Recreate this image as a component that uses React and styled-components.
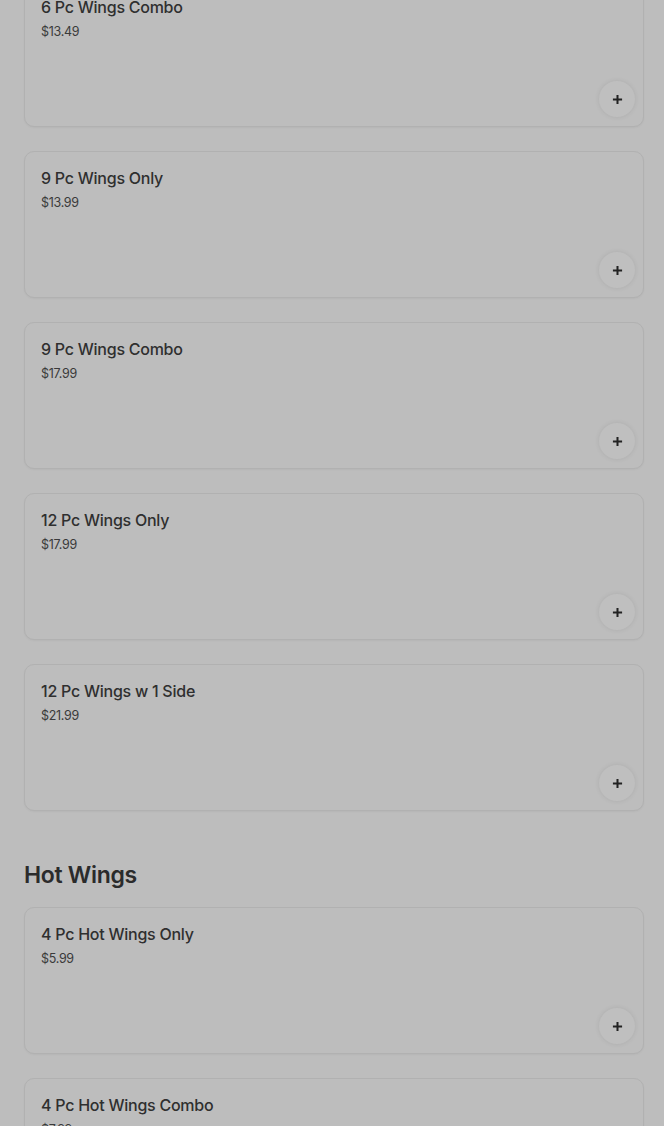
import React from "react";
import styled, { createGlobalStyle } from "styled-components";

const GlobalStyle = createGlobalStyle`
  html, body {
    margin: 0;
    padding: 0;
    background: #bdbdbd;
  }
  body {
    font-family: Inter, "Noto Sans", "Liberation Sans", sans-serif;
    color: #2e2e2e;
    overflow: hidden;
  }
`;

const sections = [
  {
    title: null,
    items: [
      { name: "6 Pc Wings Combo", price: "$13.49" },
      { name: "9 Pc Wings Only", price: "$13.99" },
      { name: "9 Pc Wings Combo", price: "$17.99" },
      { name: "12 Pc Wings Only", price: "$17.99" },
      { name: "12 Pc Wings w 1 Side", price: "$21.99" },
    ],
  },
  {
    title: "Hot Wings",
    items: [
      { name: "4 Pc Hot Wings Only", price: "$5.99" },
      { name: "4 Pc Hot Wings Combo", price: "$7.99" },
      { name: "6 Pc Hot Wings Only", price: "$8.99" },
    ],
  },
];

const Page = styled.main`
  padding: 0 20px 0 24px;
  margin-top: -20px;
`;

const Section = styled.section`
  & + & {
    margin-top: 48px;
  }
`;

const Heading = styled.h2`
  margin: 0 0 16px;
  font-size: 23px;
  line-height: 32px;
  font-weight: 600;
  letter-spacing: -0.3px;
  color: #2b2b2b;
`;

const List = styled.div`
  display: flex;
  flex-direction: column;
  gap: 24px;
`;

const Card = styled.div`
  box-sizing: border-box;
  height: 147px;
  display: flex;
  flex-direction: column;
  padding: 16px 8px 9px 16px;
  border: 1px solid #b1b1b1;
  border-radius: 10px;
  background: #bdbdbd;
  box-shadow: 0 1px 2px rgba(0, 0, 0, 0.04);
`;

const Name = styled.div`
  font-size: 16px;
  line-height: 20px;
  font-weight: 500;
  letter-spacing: -0.25px;
  color: #2f2f2f;
`;

const Price = styled.div`
  margin-top: 6px;
  font-size: 12.5px;
  line-height: 18px;
  letter-spacing: -0.3px;
  color: #3a3a3a;
`;

const AddButton = styled.button`
  margin-top: auto;
  align-self: flex-end;
  width: 36px;
  height: 36px;
  border: none;
  border-radius: 50%;
  padding: 0;
  display: flex;
  align-items: center;
  justify-content: center;
  background: #bfbfbf;
  box-shadow: 0 0 5px rgba(0, 0, 0, 0.09);
  color: #222;
  cursor: pointer;
`;

const PlusIcon = () => (
  <svg width="11" height="11" viewBox="0 0 12 12" aria-hidden="true">
    <path d="M6 1v10M1 6h10" stroke="currentColor" strokeWidth="2.2" />
  </svg>
);

const MenuCard = ({ name, price }) => (
  <Card>
    <Name>{name}</Name>
    <Price>{price}</Price>
    <AddButton aria-label={`Add ${name}`}>
      <PlusIcon />
    </AddButton>
  </Card>
);

export default function App() {
  return (
    <>
      <GlobalStyle />
      <Page>
        {sections.map((section, i) => (
          <Section key={i}>
            {section.title && <Heading>{section.title}</Heading>}
            <List>
              {section.items.map((item) => (
                <MenuCard key={item.name} {...item} />
              ))}
            </List>
          </Section>
        ))}
      </Page>
    </>
  );
}
